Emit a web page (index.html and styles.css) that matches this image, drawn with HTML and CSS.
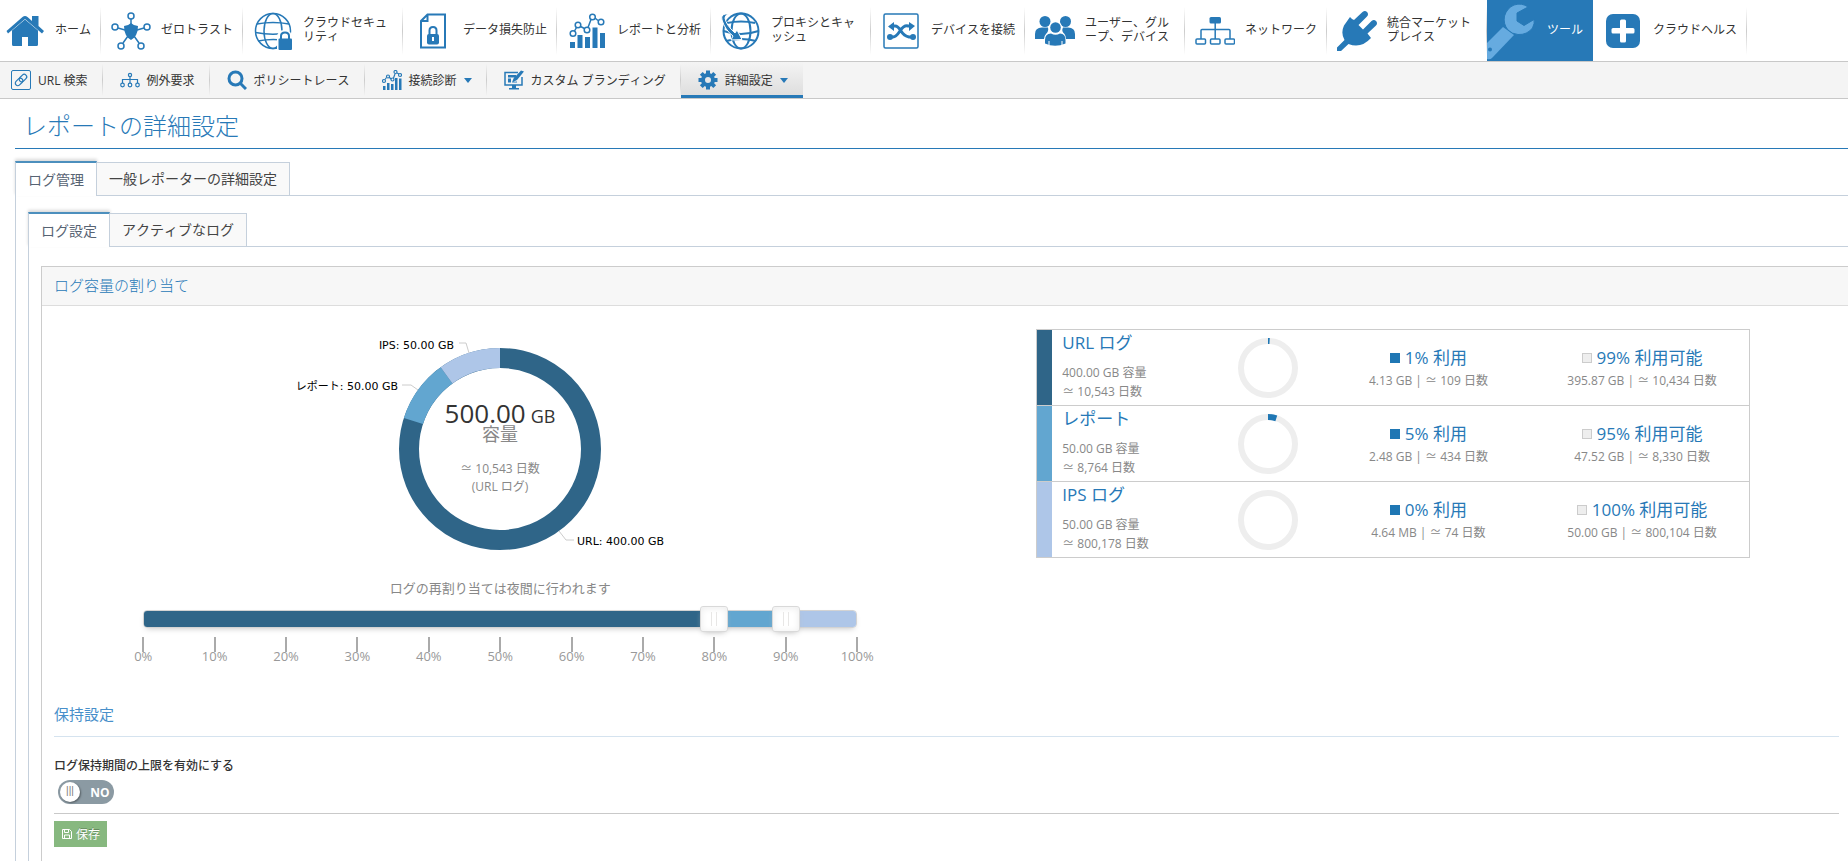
FILE: index.html
```
<!DOCTYPE html>
<html lang="ja">
<head>
    <meta charset="UTF-8">
    <meta name="viewport" content="width=device-width, initial-scale=1.0">
    <title>レポートの詳細設定</title>
    <link rel="stylesheet" href="styles.css">
</head>
<body>
    <nav class="main-nav" aria-label="メイン">
        <a href="#" class="nav-item nav-home">
            <svg class="nav-icon" viewBox="0 0 40 40"><path d="M20 8.500L7 19.500V33.500Q7 35 8.500 35H17V26H23V35H31.500Q33 35 33 33.500V19.500Z"/><path d="M27 5H33.500V15L39 20L37 22.500L20 8L3 22.500L1.500 20L17.500 6Q20 4 22.500 6L27 10Z"/></svg>
            <span class="nav-label">ホーム</span>
        </a>
        <a href="#" class="nav-item">
            <svg class="nav-icon" viewBox="0 0 40 40"><path d="M20 12Q23 15 27 15Q27 25 20 29Q13 25 13 15Q17 15 20 12Z"/><g class="line"><path d="M20 8V14M7 17L14 19M33 17L26 19M12 32L17 25M28 32L23 25"/><circle cx="20" cy="5" r="3"/><circle cx="4" cy="16" r="3"/><circle cx="36" cy="16" r="3"/><circle cx="10" cy="35" r="3"/><circle cx="30" cy="35" r="3"/></g></svg>
            <span class="nav-label">ゼロトラスト</span>
        </a>
        <a href="#" class="nav-item">
            <svg class="nav-icon" viewBox="0 0 40 40"><g class="line"><circle cx="20" cy="20" r="17.500"/><ellipse cx="20" cy="20" rx="9" ry="17.500"/><path d="M4 13Q20 10 36 13M2.500 21.500Q20 25 37.500 21.500M5 30Q20 27 36 30"/></g><path class="gap" d="M24 27Q24 19 31.500 19T39 27V40H24Z"/><rect x="25.500" y="27.500" width="13.500" height="11.500" rx="1"/><path class="line thick" d="M28 28V25Q28 21.500 32 21.500T36 25V28"/></svg>
            <span class="nav-label">クラウドセキュリティ</span>
        </a>
        <a href="#" class="nav-item">
            <svg class="nav-icon" viewBox="0 0 40 40"><path class="line thick" d="M14.500 3.500H32V36.500H8V10ZM14.500 3.500V10H8"/><rect x="14" y="23" width="12" height="10.500" rx="2"/><path class="line thick" d="M16.500 24V19.500Q16.500 16 20 16T23.500 19.500V24"/><path class="gap" d="M19 26H21V30H19Z"/></svg>
            <span class="nav-label">データ損失防止</span>
        </a>
        <a href="#" class="nav-item">
            <svg class="nav-icon" viewBox="0 0 40 40"><path d="M3 31H8V37H3ZM10.500 24H15.500V37H10.500ZM18 26H23V37H18ZM25.500 16.500H30.500V37H25.500ZM33 22H38V37H33Z"/><g class="line"><path d="M7.500 20L9.500 16.500M13.500 15.500L17.500 17.500M21 16.500L24 8.500M28 7L31 9.500"/><circle cx="6" cy="22.500" r="2.800"/><circle cx="11" cy="14" r="2.800"/><circle cx="20" cy="19" r="2.800"/><circle cx="25.500" cy="6" r="2.800"/><circle cx="34" cy="11" r="2.800"/></g></svg>
            <span class="nav-label">レポートと分析</span>
        </a>
        <a href="#" class="nav-item">
            <svg class="nav-icon" viewBox="0 0 40 40"><g class="line thick"><circle cx="20" cy="20" r="17.500"/><ellipse cx="20" cy="20" rx="9.500" ry="17.500"/><path d="M6 12Q20 9 34 12M2.500 20Q20 26 37.500 20M5 30Q20 26 35 30"/></g><path class="outlined" d="M8 3Q-1 2 1 9Q4 19 12 25L10 29L21 28.500L16 19L14 22Q5 14 4 7Q4 4 8 3Z"/></svg>
            <span class="nav-label">プロキシとキャッシュ</span>
        </a>
        <a href="#" class="nav-item">
            <svg class="nav-icon" viewBox="0 0 40 40"><rect class="line" x="3" y="3" width="34" height="34" rx="1.500"/><path class="line heavy" d="M9 26H12Q15 26 19 20T27 15H29M11 15H14Q17 15 20 20T28 26H31"/><path d="M7 15.500L13 11V20ZM34 15L28 11V20Z"/><circle cx="9" cy="26" r="3"/><circle cx="32" cy="26" r="3"/></svg>
            <span class="nav-label">デバイスを接続</span>
        </a>
        <a href="#" class="nav-item">
            <svg class="nav-icon" viewBox="0 0 40 40"><circle cx="10" cy="10.500" r="5.500"/><circle cx="30.500" cy="10.500" r="5.500"/><path d="M0 28V23Q0 16.500 7 16.500H13Q14 20 11 23Q9 25 9 28ZM40 28V23Q40 16.500 33 16.500H28Q26 20 29.500 23Q31 25 31 28Z"/><circle class="gap" cx="20.500" cy="16.500" r="6.500"/><circle cx="20.500" cy="16.500" r="5.300"/><path d="M10 32.500V29Q10 22.500 16 22.500Q20.500 25 25 22.500Q30.500 22.500 30.500 29V32.500Q20 37 10 32.500Z"/><path class="cut" d="M14 30V34M27 30V34"/></svg>
            <span class="nav-label">ユーザー、グループ、デバイス</span>
        </a>
        <a href="#" class="nav-item">
            <svg class="nav-icon" viewBox="0 0 40 40"><rect x="14.500" y="6" width="11.500" height="6.500" rx="1.500"/><path class="line" d="M20.200 12V28M6 28V19.500Q6 18.500 7 18.500H34Q35 18.500 35 19.500V28"/><g class="line"><rect x="1" y="28" width="9.500" height="5" rx="1"/><rect x="15.500" y="28" width="9.500" height="5" rx="1"/><rect x="30" y="28" width="9.500" height="5" rx="1"/></g></svg>
            <span class="nav-label">ネットワーク</span>
        </a>
        <a href="#" class="nav-item">
            <svg class="nav-icon" viewBox="0 0 40 40"><path d="M0 36.500L7.500 29Q3.500 22 7 14.500L13 6L15 8L17 9L25.500 1Q28 -1 30 1T30 5.500L21.500 14L26 18.500L34.500 10Q37 8 39 10T39 14.500L30.500 22.500L34 27Q24 38 11.500 33L4 40H0Z"/></svg>
            <span class="nav-label">統合マーケットプレイス</span>
        </a>
        <a href="#" class="nav-item nav-active" aria-current="page">
            <svg class="wrench-icon" viewBox="0 0 48 61"><path d="M16 27L27 35L5 58Q3 60 0 59V43Z"/><path class="wrench-head" d="M41 7L30 13V21L37 25.500L47 19.500Q48 23 45.500 28Q40 35 31 34.500Q25 34 21 30Q16 24 17.500 16Q20 8 27 5Q35 2.500 41 7Z"/><circle class="wrench-hole" cx="3" cy="49.500" r="2"/></svg>
            <span class="nav-label">ツール</span>
        </a>
        <a href="#" class="nav-item">
            <svg class="nav-icon" viewBox="0 0 40 40"><rect x="3" y="3" width="34" height="34" rx="7"/><path class="gap" d="M17 10Q17 8.500 18.500 8.500H21.500Q23 8.500 23 10V17H30Q31.500 17 31.500 18.500V21Q31.500 22.500 30 22.500H23V30Q23 31.500 21.500 31.500H18.500Q17 31.500 17 30V22.500H10Q8.500 22.500 8.500 21V18.500Q8.500 17 10 17H17Z"/></svg>
            <span class="nav-label">クラウドヘルス</span>
        </a>
    </nav>

    <nav class="sub-nav" aria-label="ツール">
        <a href="#" class="sub-item sub-first">
            <svg class="sub-icon" viewBox="0 0 20 20"><rect class="line thin" x="0.500" y="0.500" width="19" height="19" rx="1.500"/><g class="line link" transform="rotate(-45 10 10)"><rect x="3" y="7.500" width="8.500" height="5" rx="2.500"/><rect x="8.500" y="7.500" width="8.500" height="5" rx="2.500"/></g></svg>
            URL 検索
        </a>
        <a href="#" class="sub-item">
            <svg class="sub-icon" viewBox="0 0 20 20"><g class="line link"><circle cx="10" cy="5" r="1.600"/><path d="M10 7V13M2.500 13V9.500H17.500V13"/><circle cx="2.500" cy="15" r="1.800"/><circle cx="10" cy="15" r="1.800"/><circle cx="17.500" cy="15" r="1.800"/></g></svg>
            例外要求
        </a>
        <a href="#" class="sub-item">
            <svg class="sub-icon" viewBox="0 0 20 20"><circle class="line heavy" cx="8.500" cy="8.500" r="6.500"/><path class="line heavy" d="M13.500 13.500L19 19"/></svg>
            ポリシートレース
        </a>
        <a href="#" class="sub-item">
            <svg class="sub-icon" viewBox="0 0 20 20"><path d="M1 16H3.500V20H1ZM5 13H7.500V20H5ZM9 14H11.500V20H9ZM13 8H15.500V20H13ZM17 11V8.500H19.500V20H17Z"/><g class="line link"><path d="M3 9.500L4.500 7.500M7 7L9 9M11.500 8L13 4M15 3L17 4"/><circle cx="2" cy="11" r="1.500"/><circle cx="6" cy="6.500" r="1.500"/><circle cx="10.500" cy="9.500" r="1.500"/><circle cx="13.500" cy="2" r="1.500"/><circle cx="18" cy="5" r="1.500"/></g></svg>
            接続診断
            <span class="caret"></span>
        </a>
        <a href="#" class="sub-item">
            <svg class="sub-icon" viewBox="0 0 20 20"><path class="line" d="M14 2.500H1V15H18V7"/><path d="M8 15H12V18H15V19.500H5V18H8ZM4 5H12V7.500H4ZM4 8.500H7V12.500H4ZM8 12.500L9.500 8.500L17 0.500L20 1.500L13 10ZM8.500 12L13 11.500V12.500H8.500Z"/></svg>
            カスタム ブランディング
        </a>
        <a href="#" class="sub-item sub-active" aria-current="page">
            <svg class="sub-icon" viewBox="0 0 20 20"><circle class="line gear" cx="10" cy="10" r="5"/><path class="line gear" d="M10 0.500V4M10 16V19.500M0.500 10H4M16 10H19.500M3.300 3.300L5.800 5.800M14.200 14.200L16.700 16.700M16.700 3.300L14.200 5.800M5.800 14.200L3.300 16.700"/></svg>
            詳細設定
            <span class="caret"></span>
        </a>
    </nav>

    <main class="page">
        <h1 class="page-title">レポートの詳細設定</h1>

        <div class="tabs" role="tablist">
            <button type="button" class="tab active" role="tab" aria-selected="true">ログ管理</button>
            <button type="button" class="tab" role="tab" aria-selected="false">一般レポーターの詳細設定</button>
        </div>
        <div class="tab-content">
            <div class="tabs" role="tablist">
                <button type="button" class="tab active" role="tab" aria-selected="true">ログ設定</button>
                <button type="button" class="tab" role="tab" aria-selected="false">アクティブなログ</button>
            </div>
            <div class="tab-content inner">
                <section class="panel">
                    <h2 class="panel-header">ログ容量の割り当て</h2>
                    <div class="panel-body">
                        <div class="allocation">
                            <div class="column">
                                <svg class="donut" viewBox="0 0 480 240" role="img" aria-label="ログ容量">
                                    <!-- 円周を100として描画 -->
                                    <g class="donut-ring" transform="rotate(-90 240 120)">
                                        <circle class="ring-url" cx="240" cy="120" r="91"/>
                                        <circle class="ring-report" cx="240" cy="120" r="91" pathLength="100" stroke-dasharray="0 80 10 10"/>
                                        <circle class="ring-ips" cx="240" cy="120" r="91" pathLength="100" stroke-dasharray="0 90 10 10"/>
                                    </g>
                                    <path class="leader" d="M199 14H206L209 24M142 56H151L158 61M299 202L306 211H314"/>
                                    <text class="slice-label" x="194" y="20" text-anchor="end">IPS: 50.00 GB</text>
                                    <text class="slice-label" x="138" y="61" text-anchor="end">レポート: 50.00 GB</text>
                                    <text class="slice-label" x="317" y="216">URL: 400.00 GB</text>
                                    <g text-anchor="middle">
                                        <text class="total" x="240" y="94">500.00<tspan class="unit" dx="5">GB</tspan></text>
                                        <text class="unit muted" x="240" y="112">容量</text>
                                        <text class="small muted" x="240" y="144">≃ 10,543 日数</text>
                                        <text class="small muted" x="240" y="162">(URL ログ)</text>
                                    </g>
                                </svg>
                                <p class="slider-note">ログの再割り当ては夜間に行われます</p>
                                <div class="slider">
                                    <div class="slider-bar">
                                        <span class="seg-url" style="width: 80%"></span>
                                        <span class="seg-report" style="width: 10%"></span>
                                        <span class="seg-ips" style="width: 10%"></span>
                                    </div>
                                    <input type="range" class="slider-input" min="0" max="100" value="80" aria-label="URL ログの割り当て">
                                    <input type="range" class="slider-input" min="0" max="100" value="90" aria-label="レポートの割り当て">
                                </div>
                                <ul class="ticks">
                                    <li>0%</li>
                                    <li>10%</li>
                                    <li>20%</li>
                                    <li>30%</li>
                                    <li>40%</li>
                                    <li>50%</li>
                                    <li>60%</li>
                                    <li>70%</li>
                                    <li>80%</li>
                                    <li>90%</li>
                                    <li>100%</li>
                                </ul>
                            </div>

                            <div class="column">
                                <table class="usage">
                                    <colgroup>
                                        <col class="col-swatch">
                                        <col>
                                        <col class="col-ring">
                                        <col class="col-stat">
                                        <col class="col-stat">
                                    </colgroup>
                                    <tbody>
                                        <tr>
                                            <td class="seg-url"></td>
                                            <th scope="row" class="log-name">
                                                <span class="log-title">URL ログ</span>
                                                <span class="detail">400.00 GB 容量<br>≃ 10,543 日数</span>
                                            </th>
                                            <td><svg class="mini-ring" viewBox="0 0 60 60"><circle class="mini-track" cx="30" cy="30" r="27"/><circle class="mini-value" cx="30" cy="30" r="27" pathLength="100" stroke-dasharray="1 99" transform="rotate(-90 30 30)"/></svg></td>
                                            <td class="stat"><span class="stat-value"><i class="box used"></i>1% 利用</span><span class="detail">4.13 GB | ≃ 109 日数</span></td>
                                            <td class="stat"><span class="stat-value"><i class="box free"></i>99% 利用可能</span><span class="detail">395.87 GB | ≃ 10,434 日数</span></td>
                                        </tr>
                                        <tr>
                                            <td class="seg-report"></td>
                                            <th scope="row" class="log-name">
                                                <span class="log-title">レポート</span>
                                                <span class="detail">50.00 GB 容量<br>≃ 8,764 日数</span>
                                            </th>
                                            <td><svg class="mini-ring" viewBox="0 0 60 60"><circle class="mini-track" cx="30" cy="30" r="27"/><circle class="mini-value" cx="30" cy="30" r="27" pathLength="100" stroke-dasharray="5 95" transform="rotate(-90 30 30)"/></svg></td>
                                            <td class="stat"><span class="stat-value"><i class="box used"></i>5% 利用</span><span class="detail">2.48 GB | ≃ 434 日数</span></td>
                                            <td class="stat"><span class="stat-value"><i class="box free"></i>95% 利用可能</span><span class="detail">47.52 GB | ≃ 8,330 日数</span></td>
                                        </tr>
                                        <tr>
                                            <td class="seg-ips"></td>
                                            <th scope="row" class="log-name">
                                                <span class="log-title">IPS ログ</span>
                                                <span class="detail">50.00 GB 容量<br>≃ 800,178 日数</span>
                                            </th>
                                            <td><svg class="mini-ring" viewBox="0 0 60 60"><circle class="mini-track" cx="30" cy="30" r="27"/></svg></td>
                                            <td class="stat"><span class="stat-value"><i class="box used"></i>0% 利用</span><span class="detail">4.64 MB | ≃ 74 日数</span></td>
                                            <td class="stat"><span class="stat-value"><i class="box free"></i>100% 利用可能</span><span class="detail">50.00 GB | ≃ 800,104 日数</span></td>
                                        </tr>
                                    </tbody>
                                </table>
                            </div>
                        </div>

                        <h3 class="section-title">保持設定</h3>
                        <form class="retention">
                            <label class="field-label" for="retention-limit">ログ保持期間の上限を有効にする</label>
                            <label class="switch">
                                <input type="checkbox" id="retention-limit">
                                <span class="switch-knob">|||</span>
                                <span class="switch-text">NO</span>
                            </label>
                            <div class="form-actions">
                                <button type="button" class="btn-save">
                                    <svg class="save-icon" viewBox="0 0 10 10"><path d="M0.500 0.500H7.500L9.500 2.500V9.500H0.500ZM2.500 0.500V3.500H6.500V0.500M2.500 9.500V6H7.500V9.500"/></svg>
                                    保存
                                </button>
                            </div>
                        </form>
                    </div>
                </section>
            </div>
        </div>
    </main>
</body>
</html>
```

FILE: styles.css
```
* {
    margin: 0;
    padding: 0;
    box-sizing: border-box;
}

body {
    font-family: "Open Sans", "Noto Sans CJK JP", sans-serif;
    font-size: 12px;
    font-weight: 400;
    font-kerning: none;
    color: #333;
    background: #fff;
    min-height: 100vh;
    display: flex;
    flex-direction: column;
    overflow-x: hidden;
}

a {
    color: inherit;
    text-decoration: none;
}

button,
input {
    font: inherit;
    font-kerning: none;
}

svg {
    display: block;
    flex: none;
}

/* Main navigation */
.main-nav {
    display: flex;
    height: 62px;
    border-bottom: 1px solid #c8c8c8;
}

.nav-item {
    display: flex;
    align-items: center;
    gap: 10px;
    padding: 0 10px;
    background: linear-gradient(transparent, #ccc, transparent) right center / 1px 48px no-repeat;
}

.nav-home {
    padding-left: 5px;
}

.nav-icon {
    width: 40px;
    height: 40px;
}

.nav-icon,
.sub-icon {
    fill: #2779b7;
}

.nav-label {
    max-width: 90px;
    padding-bottom: 2px;
    line-height: 14px;
    line-break: anywhere;
}

.nav-active {
    padding-left: 0;
    gap: 12px;
    color: #fff;
    background: #2779b7;
}

.line {
    fill: none;
    stroke: #2779b7;
    stroke-width: 1.5;
}

.thin {
    stroke-width: 1;
}

.link {
    stroke-width: 1.2;
}

.thick {
    stroke-width: 2;
}

.heavy {
    stroke-width: 3;
}

.gap {
    fill: #fff;
}

.cut,
.outlined {
    stroke: #fff;
    stroke-width: 1;
}

.wrench-icon {
    width: 48px;
    height: 61px;
    fill: #66abe0;
}

.wrench-head {
    stroke: #2779b7;
    stroke-width: 1;
}

.wrench-hole {
    fill: #2779b7;
}

/* Sub navigation */
.sub-nav {
    display: flex;
    height: 37px;
    background: #f4f4f4;
    border-bottom: 1px solid #c8c8c8;
}

.sub-item {
    display: flex;
    align-items: center;
    gap: 7px;
    padding: 0 15px 0 17px;
    background: linear-gradient(transparent, #ccc, transparent) right center / 1px 32px no-repeat;
}

.sub-first {
    padding-left: 11px;
}

.sub-icon {
    width: 20px;
    height: 20px;
}

.sub-active {
    background: linear-gradient(#f4f4f4, #dedede);
    border-bottom: 3px solid #2779b7;
    padding-top: 3px;
}

.gear {
    stroke-width: 4;
}

.caret {
    border: 4px solid transparent;
    border-top: 5px solid #2779b7;
    border-bottom: 0;
}

/* Page */
.page {
    flex: 1;
    display: flex;
    flex-direction: column;
    padding-left: 15px;
}

.page-title {
    padding: 8px 8px 0;
    height: 50px;
    margin-bottom: 12px;
    font-size: 24px;
    line-height: 38px;
    font-weight: 300;
    color: #2779b7;
    border-bottom: 1px solid #2779b7;
}

.tabs {
    display: flex;
    align-items: flex-end;
    height: 35px;
    background: linear-gradient(#c5d0dc, #c5d0dc) bottom / 100% 1px no-repeat;
}

.tab {
    height: 34px;
    padding: 0 12px 2px;
    font-size: 14px;
    color: #444;
    background: #f9f9f9;
    border: 1px solid #c5d0dc;
    border-left: 0;
}

.tab.active {
    height: 35px;
    color: #576373;
    background: #fff;
    border: 1px solid #c5d0dc;
    border-top: 2px solid #4c8fbd;
    border-bottom: 0;
    box-shadow: 0 -2px 3px rgba(0, 0, 0, 0.15);
}

.tab-content {
    flex: 1;
    display: flex;
    flex-direction: column;
    padding: 16px 0 0 12px;
    border-left: 1px solid #c5d0dc;
}

.tab-content.inner {
    padding-top: 19px;
}

.panel {
    flex: 1;
    border: 1px solid #ccc;
    border-width: 1px 0 0 1px;
}

.panel-header {
    height: 39px;
    padding: 0 12px;
    font-size: 15px;
    line-height: 36px;
    font-weight: 300;
    color: #2779b7;
    background: #f7f7f7;
    border-bottom: 1px solid #ddd;
}

.panel-body {
    padding: 23px 9px 0 12px;
}

.allocation {
    display: grid;
    grid-template-columns: 1fr 1fr;
}

.column {
    width: 80%;
    margin: 0 auto;
}

/* Donut */
.donut {
    width: 480px;
    height: 240px;
    margin: 0 auto;
}

.donut-ring {
    fill: none;
    stroke-width: 20;
}

.ring-url {
    stroke: #2f6588;
}

.ring-report {
    stroke: #62a6d0;
}

.ring-ips {
    stroke: #aec6e8;
}

.leader {
    fill: none;
    stroke: #ccc;
}

.slice-label {
    font-family: "DejaVu Sans", "Noto Sans CJK JP", sans-serif;
    font-size: 11px;
    fill: #000;
}

.total {
    font-size: 26px;
    fill: #333;
}

.unit {
    font-size: 18px;
}

.small {
    font-size: 12px;
}

.muted {
    fill: #888;
}

/* Slider */
.slider-note {
    margin: 9px 0 12px;
    font-size: 13px;
    line-height: 20px;
    text-align: center;
    color: #888;
}

.slider {
    position: relative;
    height: 18px;
}

.slider-bar {
    display: flex;
    height: 18px;
    border: 1px solid #d3d3d3;
    border-radius: 4px;
    overflow: hidden;
    box-shadow: 0 3px 6px -3px #bbb;
}

.seg-url {
    background: #2f6588;
}

.seg-report {
    background: #62a6d0;
}

.seg-ips {
    background: #aec6e8;
}

.slider-input {
    position: absolute;
    top: -4px;
    left: -14px;
    width: calc(100% + 28px);
    height: 26px;
    appearance: none;
    background: none;
    pointer-events: none;
}

.slider-input::-webkit-slider-thumb {
    appearance: none;
    width: 28px;
    height: 26px;
    border: 1px solid #d9d9d9;
    border-radius: 3px;
    background:
        linear-gradient(#e8e7e6, #e8e7e6) 10px center / 1px 14px no-repeat,
        linear-gradient(#e8e7e6, #e8e7e6) 15px center / 1px 14px no-repeat,
        #fff;
    box-shadow: inset 0 0 1px #fff, inset 0 1px 7px #ebebeb, 0 3px 6px -3px #bbb;
    pointer-events: auto;
    cursor: pointer;
}

.ticks {
    display: flex;
    justify-content: space-between;
    margin-top: 9px;
    list-style: none;
    font-size: 13px;
    line-height: 8px;
    color: #999;
}

.ticks li {
    display: flex;
    flex-direction: column;
    align-items: center;
    width: 0;
}

.ticks li::before {
    content: "";
    width: 2px;
    height: 15px;
    background: #aaa;
}

/* Usage table */
.usage {
    width: 100%;
    table-layout: fixed;
    border-collapse: collapse;
    border: 1px solid #ccc;
}

.usage tr {
    height: 76px;
    border-top: 1px solid #ccc;
}

.col-swatch {
    width: 16px;
}

.col-ring {
    width: 15%;
}

.col-stat {
    width: 30%;
}

.log-name {
    padding-left: 10px;
    text-align: left;
    vertical-align: top;
    font-weight: 400;
}

.log-title {
    display: block;
    margin-bottom: 7px;
    font-size: 17px;
    line-height: 26px;
    color: #2779b7;
}

.detail {
    display: block;
    line-height: 19px;
    color: #888;
}

.mini-ring {
    width: 60px;
    height: 60px;
    margin: 0 auto;
    fill: none;
    stroke-width: 6;
}

.mini-track {
    stroke: #eee;
}

.mini-value {
    stroke: #1f77b4;
}

.stat {
    text-align: center;
    vertical-align: middle;
}

.stat-value {
    display: flex;
    align-items: center;
    justify-content: center;
    gap: 5px;
    font-size: 17px;
    line-height: 26px;
    color: #2779b7;
}

.box {
    width: 10px;
    height: 10px;
}

.used {
    background: #1f77b4;
}

.free {
    background: #eee;
    border: 1px solid #ccc;
}

/* Retention */
.section-title {
    margin: 42px 0 19px;
    padding-bottom: 10px;
    font-size: 15px;
    line-height: 24px;
    font-weight: 400;
    color: #478fca;
    border-bottom: 1px solid #d5e3ef;
}

.field-label {
    display: block;
    line-height: 20px;
    font-weight: 500;
}

.switch {
    display: flex;
    align-items: center;
    width: 56px;
    height: 24px;
    margin: 4px 4px 9px;
    padding: 2px;
    border-radius: 12px;
    background: #8b9aa3;
    color: #fff;
    font-weight: 700;
    cursor: pointer;
}

.switch input {
    appearance: none;
    width: 0;
    height: 0;
}

.switch-knob {
    width: 20px;
    height: 20px;
    border-radius: 50%;
    background: #fff;
    color: #777;
    font-family: "Liberation Sans", sans-serif;
    font-size: 10px;
    line-height: 18px;
    font-weight: 400;
    text-align: center;
    box-shadow: 1px 1px 2px rgba(0, 0, 0, 0.4);
}

.switch-text {
    flex: 1;
    padding-left: 8px;
    text-align: center;
}

.form-actions {
    padding-top: 7px;
    border-top: 1px solid #c9c9c9;
}

.btn-save {
    display: flex;
    align-items: center;
    gap: 4px;
    height: 26px;
    padding: 0 7px 0 8px;
    border: 0;
    background: #87b87f;
    color: #fff;
    text-shadow: 0 -1px 0 rgba(0, 0, 0, 0.25);
    cursor: pointer;
}

.save-icon {
    width: 10px;
    height: 10px;
    fill: none;
    stroke: #fff;
}
```
